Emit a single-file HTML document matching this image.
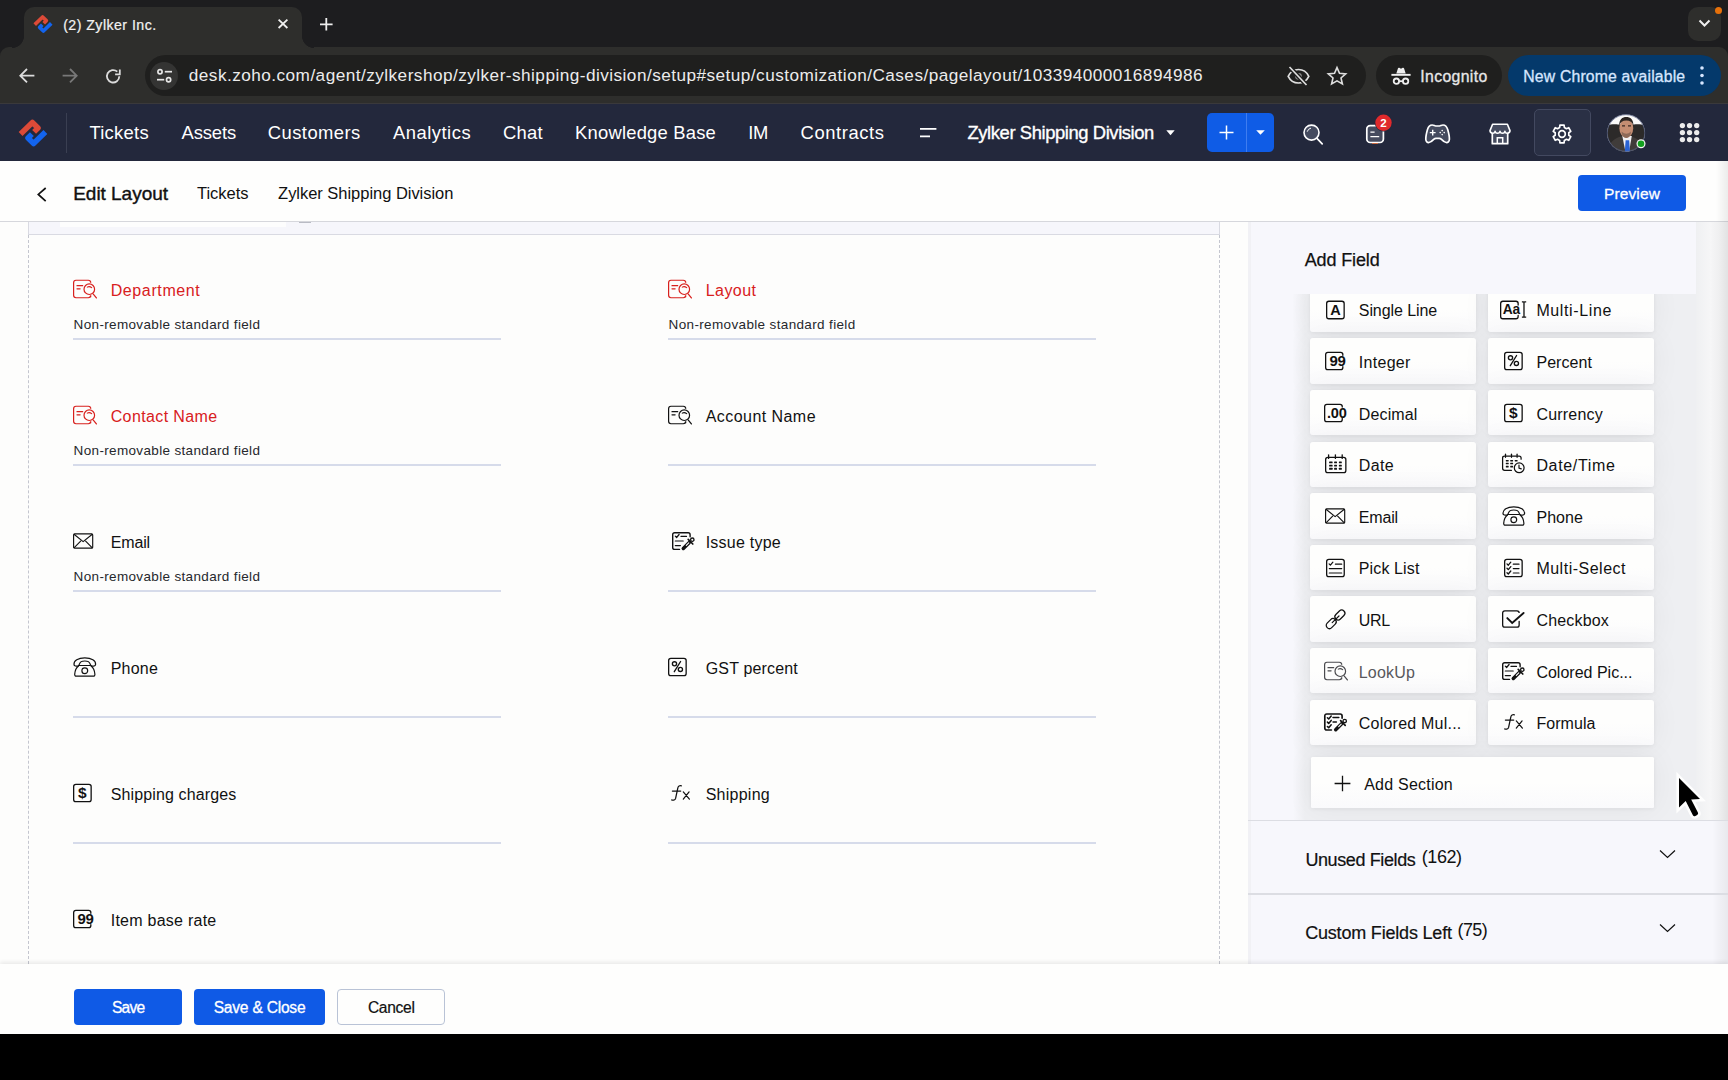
<!DOCTYPE html>
<html lang="en">
<head>
<meta charset="utf-8">
<title>(2) Zylker Inc.</title>
<style>
*{box-sizing:border-box;margin:0;padding:0}
html,body{width:1728px;height:1080px;overflow:hidden;background:#000}
body{position:relative;font-family:"Liberation Sans",sans-serif;color:#111}
.abs{position:absolute}
.t{position:absolute;white-space:nowrap;line-height:1}
svg{position:absolute;overflow:visible}
#tabstrip{left:0;top:0;width:1728px;height:62px;background:#1d1d1f}
#tab{left:24px;top:7px;width:278px;height:41px;background:#2e2e2c;border-radius:10px 10px 0 0}
#tabL{left:12px;top:35.5px;width:12px;height:12px;background:radial-gradient(circle at 0 0,#1d1d1f 11.7px,#2e2e2c 12.3px)}
#tabR{left:302px;top:35.5px;width:12px;height:12px;background:radial-gradient(circle at 100% 0,#1d1d1f 11.7px,#2e2e2c 12.3px)}
#toolbar{left:0;top:47px;width:1728px;height:57px;background:#2e2e2c;border-radius:9px 9px 0 0}
#urlbar{left:145px;top:55px;width:1221px;height:41px;border-radius:21px;background:#1f1f1e}
#siteinfo{left:150px;top:61.5px;width:28px;height:28px;border-radius:14px;background:#343433}
#incog{left:1376px;top:55px;width:126px;height:41px;border-radius:21px;background:#1f1f1e}
#newchrome{left:1508px;top:55px;width:213px;height:41px;border-radius:21px;background:#04396b}
#tabdd{left:1688px;top:7px;width:33px;height:34px;border-radius:10px;background:#2e2e2c}
#odot{left:1714.5px;top:6.5px;width:7px;height:7px;border-radius:4px;background:#e8710a}
#nav{left:0;top:104px;width:1728px;height:57px;background:#23283c}
#tbline{left:0;top:103px;width:1728px;height:1px;background:#3a393b}
#navdiv{left:66px;top:113px;width:1px;height:40px;background:#3a3f52}
#plus{left:1207px;top:113px;width:67px;height:39px;border-radius:5px;background:#0f5ce6}
#plusdiv{left:1246px;top:113px;width:1px;height:39px;background:#3f7df0}
#gearbox{left:1534px;top:109px;width:57px;height:47px;border-radius:5px;background:#2a3045;border:1px solid #434960}
#hdr{left:0;top:161px;width:1728px;height:61px;background:#fefefd;border-bottom:1px solid #d6d7dc}
#preview{left:1578px;top:175px;width:108px;height:36px;border-radius:4px;background:#0f5ae6}
#main{left:0;top:222px;width:1728px;height:742px;background:#fdfdfc}
#band{left:28px;top:222px;width:1192px;height:13px;background:#f6f6fb;border:1px solid #d9dae2;border-top:0}
#bandw{left:60px;top:222px;width:226px;height:5px;background:#fdfdfd}
#bandm{left:299px;top:222px;width:12px;height:1px;background:#b9bbc4}
.dash{position:absolute;top:235px;width:0;height:729px;border-left:1px dashed #c4c6cf}
#panel{left:1248px;top:222px;width:480px;height:742px;background:#f7f7fc;border-left:3px solid #f1f1f5}
#cardsbg{display:none}
.pdiv{position:absolute;left:1248px;width:480px;height:1px;background:#dcdde3}
#rshade{left:1696px;top:222px;width:32px;height:598px;background:linear-gradient(90deg,#eff0f2,#f6f6f7 45%,#efeff0 72%,#e2e2e3)}
#rshade3{left:1712px;top:820px;width:16px;height:144px;background:linear-gradient(90deg,rgba(0,0,0,0),rgba(0,0,0,.06))}
#rshade2{left:1716px;top:161px;width:12px;height:61px;background:linear-gradient(90deg,rgba(0,0,0,0),rgba(0,0,0,.07))}
#footer{left:0;top:964px;width:1728px;height:70px;background:#fefefd;box-shadow:0 -2px 4px rgba(0,0,0,.08)}
.btn{position:absolute;top:989px;height:36px;border-radius:4px;background:#0f5ae6}
.ul{position:absolute;height:2px;background:#d6dbea;width:428px}
.card{position:absolute;width:165.5px;height:45.6px;background:linear-gradient(#fefefd 50%,#fafafc);border-radius:3px;box-shadow:0 0 30px rgba(30,30,40,.055),0 1px 4px rgba(30,30,40,.06)}
#cardclip{left:1293px;top:294px;width:403px;height:526px;overflow:hidden;background:linear-gradient(90deg,rgba(238,239,242,0),#eeeff2 12px,#eeeff2)}
</style>
</head>
<body>
<div id="tabstrip" class="abs"></div>
<div id="toolbar" class="abs"></div>
<div id="tab" class="abs"></div><div id="tabL" class="abs"></div><div id="tabR" class="abs"></div>
<div id="tabdd" class="abs"></div><div id="odot" class="abs"></div>
<div id="urlbar" class="abs"></div><div id="siteinfo" class="abs"></div>
<div id="incog" class="abs"></div>
<div id="newchrome" class="abs"></div>
<div id="tbline" class="abs"></div><div id="nav" class="abs"></div><div id="navdiv" class="abs"></div>
<div id="plus" class="abs"></div><div id="plusdiv" class="abs"></div>
<div id="gearbox" class="abs"></div>
<div id="hdr" class="abs"></div>
<div id="preview" class="abs"></div>
<div id="main" class="abs"></div>
<div id="band" class="abs"></div><div id="bandw" class="abs"></div><div id="bandm" class="abs"></div>
<div class="dash" style="left:28px"></div><div class="dash" style="left:1219px"></div>
<div id="panel" class="abs"></div>
<div id="cardsbg" class="abs"></div><div id="cardclip" class="abs" style=""><div class="card" style="left:17.4px;top:-7.3px"></div><div class="card" style="left:195.0px;top:-7.3px"></div><div class="card" style="left:17.4px;top:44.3px"></div><div class="card" style="left:195.0px;top:44.3px"></div><div class="card" style="left:17.4px;top:95.9px"></div><div class="card" style="left:195.0px;top:95.9px"></div><div class="card" style="left:17.4px;top:147.5px"></div><div class="card" style="left:195.0px;top:147.5px"></div><div class="card" style="left:17.4px;top:199.1px"></div><div class="card" style="left:195.0px;top:199.1px"></div><div class="card" style="left:17.4px;top:250.7px"></div><div class="card" style="left:195.0px;top:250.7px"></div><div class="card" style="left:17.4px;top:302.3px"></div><div class="card" style="left:195.0px;top:302.3px"></div><div class="card" style="left:17.4px;top:353.9px"></div><div class="card" style="left:195.0px;top:353.9px"></div><div class="card" style="left:17.4px;top:405.5px"></div><div class="card" style="left:195.0px;top:405.5px"></div><div class="card" style="left:18px;top:463px;width:342.5px;height:51px;border-radius:1.5px"></div><svg style="left:33.20px;top:3.50px" width="19.8" height="24" viewBox="0 -12 19.8 24"><rect x="0.65" y="-8.75" width="17.500000000000004" height="17.5" rx="2.2" fill="none" stroke="#111" stroke-width="1.3"/><text x="9.4" y="5" font-size="14.5" font-weight="bold" fill="#111" text-anchor="middle" font-family="Liberation Sans,sans-serif" >A</text></svg><svg style="left:207.20px;top:3.50px" width="27.2" height="24" viewBox="0 -12 27.2 24"><path d="M18.150000000000002 -4.9V-6.55Q18.150000000000002 -8.75 15.950000000000003 -8.75H2.85Q0.65 -8.75 0.65 -6.55V6.55Q0.65 8.75 2.85 8.75H15.950000000000003Q18.150000000000002 8.75 18.150000000000002 6.55V5.5" fill="none" stroke="#111" stroke-width="1.3" stroke-linecap="round"/><text x="2.8" y="3.5" font-size="13.8" font-weight="bold" fill="#111" text-anchor="start" font-family="Liberation Sans,sans-serif" letter-spacing="-.3">Aa</text><path d="M21.9 -8.2H23.2Q24 -8.2 24 -7.4V6.400Q24 7.200 23.200 7.200H21.900M26.200 -8.200H24.900Q24.050 -8.200 24.050 -7.400M24.050 6.400Q24.050 7.200 24.900 7.200H26.200" fill="none" stroke="#111" stroke-width="1.300"/></svg><svg style="left:32.25px;top:55.10px" width="21.7" height="24" viewBox="0 -12 21.7 24"><path d="M17.85 -5.7V-6.499999999999999Q17.85 -8.7 15.650000000000002 -8.7H2.85Q0.65 -8.7 0.65 -6.499999999999999V6.499999999999999Q0.65 8.7 2.85 8.7H15.650000000000002Q17.85 8.7 17.85 6.499999999999999V5.7" fill="none" stroke="#111" stroke-width="1.3" stroke-linecap="round"/><text x="4.6" y="5.2" font-size="15" font-weight="bold" fill="#111" text-anchor="start" font-family="Liberation Sans,sans-serif" letter-spacing="-.5">99</text></svg><svg style="left:210.90px;top:55.10px" width="19.8" height="24" viewBox="0 -12 19.8 24"><rect x="0.65" y="-8.7" width="17.500000000000004" height="17.4" rx="2.2" fill="none" stroke="#111" stroke-width="1.3"/><g fill="none" stroke="#111" stroke-width="1.35"><circle cx="6.5" cy="-3.2" r="2.1"/><circle cx="12.4" cy="2.4" r="2.1"/><path d="M12.6 -5.5 6.300 4.700" stroke-linecap="round"/></g></svg><svg style="left:31.05px;top:106.70px" width="24.1" height="24" viewBox="0 -12 24.1 24"><path d="M18.25 -6V-6.3999999999999995Q18.25 -8.6 16.05 -8.6H2.85Q0.65 -8.6 0.65 -6.3999999999999995V6.3999999999999995Q0.65 8.6 2.85 8.6H16.05Q18.25 8.6 18.25 6.3999999999999995V5.3" fill="none" stroke="#111" stroke-width="1.3" stroke-linecap="round"/><text x="2.9" y="5.1" font-size="14.6" font-weight="bold" fill="#111" text-anchor="start" font-family="Liberation Sans,sans-serif" letter-spacing="-.2">.00</text></svg><svg style="left:210.90px;top:106.70px" width="19.8" height="24" viewBox="0 -12 19.8 24"><rect x="0.65" y="-8.6" width="17.500000000000004" height="17.2" rx="2.2" fill="none" stroke="#111" stroke-width="1.3"/><text x="9.3" y="4.9" font-size="15.5" font-weight="bold" fill="#111" text-anchor="middle" font-family="Liberation Sans,sans-serif" >$</text></svg><svg style="left:31.85px;top:158.30px" width="22.5" height="24" viewBox="0 -12 22.5 24"><g transform="translate(0,1)"><rect x="0.65" y="-7.699999999999999" width="20.200000000000003" height="15.399999999999999" rx="2.2" fill="none" stroke="#111" stroke-width="1.3"/></g><path d="M3.6 -9.2V-5.600" stroke="#111" stroke-width="1.300" stroke-linecap="round"/><path d="M10.4 -9.2V-5.600" stroke="#111" stroke-width="1.300" stroke-linecap="round"/><path d="M17.2 -9.2V-5.600" stroke="#111" stroke-width="1.300" stroke-linecap="round"/><rect x="4.1" y="-2.45" width="3.5" height="1.800" rx=".5" fill="#111"/><rect x="4.1" y="0.75" width="3.5" height="1.800" rx=".5" fill="#111"/><rect x="4.1" y="3.85" width="3.5" height="1.800" rx=".5" fill="#111"/><rect x="9.1" y="-2.45" width="2.9" height="1.800" rx=".5" fill="#111"/><rect x="9.1" y="0.75" width="2.9" height="1.800" rx=".5" fill="#111"/><rect x="9.1" y="3.85" width="2.9" height="1.800" rx=".5" fill="#111"/><rect x="13.9" y="-2.45" width="2.9" height="1.800" rx=".5" fill="#111"/><rect x="13.9" y="0.75" width="2.9" height="1.800" rx=".5" fill="#111"/><rect x="13.9" y="3.85" width="2.9" height="1.800" rx=".5" fill="#111"/></svg><svg style="left:208.95px;top:158.30px" width="23.7" height="24" viewBox="0 -12 23.7 24"><path d="M19.1 -4.800V-6Q19.100 -8 17.100 -8H2.600Q.600 -8 .600 -6V4.300Q.600 6.300 2.600 6.300H9.500" fill="none" stroke="#111" stroke-width="1.250" stroke-linecap="round"/><path d="M3.5 -9.800V-6.700" stroke="#111" stroke-width="1.200" stroke-linecap="round"/><path d="M9.5 -9.800V-6.700" stroke="#111" stroke-width="1.200" stroke-linecap="round"/><path d="M15.1 -9.800V-6.700" stroke="#111" stroke-width="1.200" stroke-linecap="round"/><rect x="3.8" y="-4.1" width="2.900" height="1.600" rx=".4" fill="#111"/><rect x="8.2" y="-4.1" width="2.900" height="1.600" rx=".4" fill="#111"/><rect x="12.7" y="-4.1" width="2.900" height="1.600" rx=".4" fill="#111"/><rect x="3.8" y="-1.3" width="2.900" height="1.600" rx=".4" fill="#111"/><rect x="8.2" y="-1.3" width="2.900" height="1.600" rx=".4" fill="#111"/><rect x="3.8" y="1.8" width="2.900" height="1.600" rx=".4" fill="#111"/><rect x="8.2" y="1.8" width="2.900" height="1.600" rx=".4" fill="#111"/><circle cx="17.200" cy="3.800" r="4.900" fill="none" stroke="#111" stroke-width="1.250"/><path d="M17 1.100V4.200L19.300 4.900" fill="none" stroke="#111" stroke-width="1.200" stroke-linecap="round" stroke-linejoin="round"/></svg><svg style="left:32.45px;top:209.90px" width="21.3" height="24" viewBox="0 -12 21.3 24"><g fill="none" stroke="#111" stroke-width="1.150" stroke-linejoin="round"><rect x=".6" y="-7.100" width="19.100" height="14.300" rx="1"/><path d="M1 -6.700 10.150 .600 19.300 -6.700M1 6.800 7.900 -.100M19.300 6.800 12.400 -.100"/></g></svg><svg style="left:208.50px;top:209.90px" width="24.6" height="24" viewBox="0 -12 24.6 24"><g fill="none" stroke="#111" stroke-width="1.200" stroke-linejoin="round"><path d="M1 -2.600C.700 -6.200 5 -9.200 11.800 -9.200S22.900 -6.200 22.600 -2.600C22.500 -1.200 21.300 -.800 20 -.900L18.600 -1.100C17.500 -1.300 17.300 -2.100 17.100 -3.100C16.500 -5.300 14.500 -6 11.800 -6S7.100 -5.300 6.500 -3.100C6.300 -2.100 6.100 -1.300 5 -1.100L3.600 -.900C2.300 -.800 1.100 -1.200 1 -2.600Z"/><path d="M6 -1.500H17.600M5.800 -1.300C3.200 .500 1.900 4 1.700 7.400C1.650 8.600 2.300 9.100 3.300 9.100H20.300C21.300 9.100 21.950 8.600 21.900 7.400C21.700 4 20.400 .500 17.800 -1.300"/><circle cx="11.800" cy="3.700" r="2.900"/></g></svg><svg style="left:33.15px;top:261.50px" width="19.9" height="24" viewBox="0 -12 19.9 24"><rect x="0.65" y="-8.7" width="17.6" height="17.4" rx="2.2" fill="none" stroke="#111" stroke-width="1.3"/><path d="M3.1 -4.2l1.300 1.300 2.500 -3" fill="none" stroke="#111" stroke-width="1.2" stroke-linecap="round" stroke-linejoin="round"/><path d="M9.4 -3.8H15.7" stroke="#111" stroke-width="1.2" stroke-linecap="round"/><path d="M3.3 0.6H15.7" stroke="#111" stroke-width="1.2" stroke-linecap="round"/><path d="M3.3 5H15.7" stroke="#111" stroke-width="1.2" stroke-linecap="round"/></svg><svg style="left:210.90px;top:261.50px" width="19.8" height="24" viewBox="0 -12 19.8 24"><rect x="0.65" y="-8.7" width="17.500000000000004" height="17.4" rx="2.2" fill="none" stroke="#111" stroke-width="1.3"/><path d="M3 -4.1l1.300 1.300 2.500 -3" fill="none" stroke="#111" stroke-width="1.3" stroke-linecap="round" stroke-linejoin="round"/><path d="M9.3 -3.8H15" stroke="#111" stroke-width="1.2" stroke-linecap="round"/><path d="M3 0.3l1.300 1.300 2.500 -3" fill="none" stroke="#111" stroke-width="1.3" stroke-linecap="round" stroke-linejoin="round"/><path d="M9.3 0.6H15" stroke="#111" stroke-width="1.2" stroke-linecap="round"/><path d="M3 4.7l1.300 1.300 2.500 -3" fill="none" stroke="#111" stroke-width="1.3" stroke-linecap="round" stroke-linejoin="round"/><path d="M9.3 5H15" stroke="#111" stroke-width="1.2" stroke-linecap="round"/></svg><svg style="left:33.05px;top:313.10px" width="20.1" height="24" viewBox="0 -12 20.1 24"><rect x="8.2" y="-7.2" width="11.400" height="6.400" rx="3.200" transform="rotate(-45 13.9 -4)" fill="none" stroke="#111" stroke-width="1.250"/><rect x="-0.5" y="1.3999999999999995" width="11.400" height="6.400" rx="3.200" transform="rotate(-45 5.2 4.6)" fill="none" stroke="#111" stroke-width="1.250"/><path d="M6.200 3.600 13 -3" stroke="#111" stroke-width="1.200" stroke-linecap="round"/></svg><svg style="left:209.05px;top:313.10px" width="23.5" height="24" viewBox="0 -12 23.5 24"><path d="M17.150000000000002 -6.4V-5.95Q17.150000000000002 -8.15 14.950000000000003 -8.15H2.85Q0.65 -8.15 0.65 -5.95V5.95Q0.65 8.15 2.85 8.15H14.950000000000003Q17.150000000000002 8.15 17.150000000000002 5.95V2.3" fill="none" stroke="#111" stroke-width="1.3" stroke-linecap="round"/><path d="M5.300 -.900 10.200 4 21.600 -6" fill="none" stroke="#111" stroke-width="1.900" stroke-linecap="round" stroke-linejoin="miter"/></svg><svg style="left:30.75px;top:364.70px" width="24.7" height="24" viewBox="0 -12 24.7 24"><path d="M17.7 -7.1V-6.35Q17.7 -8.75 15.299999999999999 -8.75H3.0Q0.6 -8.75 0.6 -6.35V6.35Q0.6 8.75 3.0 8.75H15.299999999999999Q17.7 8.75 17.7 6.35V7.8" fill="none" stroke="#4a4a4e" stroke-width="1.2" stroke-linecap="round"/><path d="M4 -3.3H9.7" stroke="#4a4a4e" stroke-width="1.2" stroke-linecap="round"/><path d="M4 -0.2H7.1" stroke="#4a4a4e" stroke-width="1.2" stroke-linecap="round"/><circle cx="16.300" cy=".200" r="5.300" fill="none" stroke="#4a4a4e" stroke-width="1.200"/><path d="M20.100 4.800 23.400 8.900" stroke="#4a4a4e" stroke-width="1.250" stroke-linecap="round"/><path d="M14.300 -1.900Q16.400 -3.200 18.700 -1.300" fill="none" stroke="#4a4a4e" stroke-width="1.100" stroke-linecap="round"/></svg><svg style="left:209.30px;top:364.70px" width="23" height="24" viewBox="0 -12 23 24"><path d="M18.100 -4.200V-6.300Q18.100 -8.300 16.100 -8.300H2.700Q.700 -8.300 .700 -6.300V6.400Q.700 8.400 2.700 8.400H7.500" fill="none" stroke="#111" stroke-width="1.400" stroke-linecap="round"/><path d="M3.3 -4.8l1.300 1.300 2.500 -3" fill="none" stroke="#111" stroke-width="1.2" stroke-linecap="round" stroke-linejoin="round"/><path d="M9 -4.6H14.5" stroke="#111" stroke-width="1.2" stroke-linecap="round"/><path d="M3.3 0H11.2" stroke="#111" stroke-width="1.2" stroke-linecap="round"/><path d="M3.3 4.6H8.4" stroke="#111" stroke-width="1.2" stroke-linecap="round"/><g transform="translate(0,0)"><path d="M11.300 7.400 17.300 1.400" stroke="#111" stroke-width="3.500" stroke-linecap="round"/><path d="M14.300 4.400 16.800 1.900" stroke="#fff" stroke-width="1.100" stroke-linecap="round"/><path d="M16.200 -1.600 20.800 3" stroke="#111" stroke-width="1.700" stroke-linecap="round"/><circle cx="20.300" cy="-1.300" r="1.700" fill="#fff" stroke="#111" stroke-width="1.300"/></g></svg><svg style="left:31.35px;top:416.30px" width="23.5" height="24" viewBox="0 -12 23.5 24"><path d="M18.100 -3.800V-6Q18.100 -8 16.100 -8H2.800Q.800 -8 .800 -6V6Q.800 8 2.800 8H7.400" fill="none" stroke="#111" stroke-width="1.650" stroke-linecap="round"/><path d="M3.4 -4.3l1.300 1.300 2.500 -3" fill="none" stroke="#111" stroke-width="1.5" stroke-linecap="round" stroke-linejoin="round"/><path d="M3.4 0.1l1.300 1.300 2.500 -3" fill="none" stroke="#111" stroke-width="1.5" stroke-linecap="round" stroke-linejoin="round"/><path d="M3.4 4.5l1.300 1.300 2.500 -3" fill="none" stroke="#111" stroke-width="1.5" stroke-linecap="round" stroke-linejoin="round"/><path d="M9 -4.5H14.8" stroke="#111" stroke-width="1.5" stroke-linecap="round"/><path d="M9 0H12.4" stroke="#111" stroke-width="1.4" stroke-linecap="round"/><g transform="translate(0.4,0.3)"><path d="M11.300 7.400 17.300 1.400" stroke="#111" stroke-width="3.500" stroke-linecap="round"/><path d="M14.300 4.400 16.800 1.900" stroke="#fff" stroke-width="1.100" stroke-linecap="round"/><path d="M16.200 -1.600 20.800 3" stroke="#111" stroke-width="1.700" stroke-linecap="round"/><circle cx="20.300" cy="-1.300" r="1.700" fill="#fff" stroke="#111" stroke-width="1.300"/></g></svg><svg style="left:210.95px;top:416.30px" width="19.7" height="24" viewBox="0 -12 19.7 24"><g fill="none" stroke="#111" stroke-width="1.250" stroke-linecap="round" stroke-linejoin="round"><path d="M10.400 -7.200C8.600 -7.700 7.200 -7 6.800 -5L4.600 5.400C4.200 7.100 2.600 7.500 .600 7"/><path d="M1.400 -1.900H9.700"/><path d="M12.300 -1.100 18.400 6.100M18.100 -1.100 12.300 6.100"/></g></svg></div>
<div id="rshade" class="abs"></div><div id="rshade2" class="abs"></div><div id="rshade3" class="abs"></div>
<div class="pdiv" style="top:820px"></div>
<div class="pdiv" style="top:893.3px;height:1.4px"></div>
<div class="ul" style="left:73px;top:338px"></div><div class="ul" style="left:668px;top:338px"></div><div class="ul" style="left:73px;top:464px"></div><div class="ul" style="left:668px;top:464px"></div><div class="ul" style="left:73px;top:590px"></div><div class="ul" style="left:668px;top:590px"></div><div class="ul" style="left:73px;top:716px"></div><div class="ul" style="left:668px;top:716px"></div><div class="ul" style="left:73px;top:842px"></div><div class="ul" style="left:668px;top:842px"></div>
<div id="footer" class="abs"></div>
<div class="btn" style="left:74px;width:108px"></div>
<div class="btn" style="left:194px;width:131px"></div>
<div class="btn" style="left:337px;width:108px;background:#fefefd;border:1px solid #b9c3d6"></div>
<div class="t" style="left:63.2px;top:18.1px;font-size:14.2px;color:#f2f2f2;letter-spacing:0.445px;-webkit-text-stroke:.2px #f2f2f2">(2) Zylker Inc.</div>
<div class="t" style="left:188.8px;top:66.6px;font-size:17.2px;color:#ececec;letter-spacing:0.461px;">desk.zoho.com/agent/zylkershop/zylker-shipping-division/setup#setup/customization/Cases/pagelayout/103394000016894986</div>
<div class="t" style="left:1420.3px;top:68.7px;font-size:15.8px;color:#e8e8e8;letter-spacing:0.353px;-webkit-text-stroke:.3px #e8e8e8">Incognito</div>
<div class="t" style="left:1523.3px;top:68.7px;font-size:15.8px;color:#d6e6ff;letter-spacing:0.154px;-webkit-text-stroke:.3px #d6e6ff">New Chrome available</div>
<div class="t" style="left:89.4px;top:123.8px;font-size:18.4px;color:#fff;letter-spacing:0.277px;">Tickets</div>
<div class="t" style="left:181.5px;top:123.8px;font-size:18.4px;color:#fff;letter-spacing:-0.117px;">Assets</div>
<div class="t" style="left:267.8px;top:123.8px;font-size:18.4px;color:#fff;letter-spacing:0.442px;">Customers</div>
<div class="t" style="left:393.0px;top:123.8px;font-size:18.4px;color:#fff;letter-spacing:0.501px;">Analytics</div>
<div class="t" style="left:502.9px;top:123.8px;font-size:18.4px;color:#fff;letter-spacing:0.310px;">Chat</div>
<div class="t" style="left:575.1px;top:123.8px;font-size:18.4px;color:#fff;letter-spacing:0.205px;">Knowledge Base</div>
<div class="t" style="left:748.3px;top:123.8px;font-size:18.4px;color:#fff;letter-spacing:-0.369px;">IM</div>
<div class="t" style="left:800.6px;top:123.8px;font-size:18.4px;color:#fff;letter-spacing:0.566px;">Contracts</div>
<div class="t" style="left:967.5px;top:123.8px;font-size:18.4px;color:#fff;letter-spacing:-0.410px;-webkit-text-stroke:.35px #fff">Zylker Shipping Division</div>
<div class="t" style="left:73.2px;top:184.4px;font-size:19px;color:#111;letter-spacing:-0.025px;-webkit-text-stroke:.4px #111">Edit Layout</div>
<div class="t" style="left:197.0px;top:185.3px;font-size:16.5px;color:#111;letter-spacing:-0.008px;">Tickets</div>
<div class="t" style="left:278.1px;top:185.3px;font-size:16.5px;color:#111;letter-spacing:-0.032px;">Zylker Shipping Division</div>
<div class="t" style="left:1604.0px;top:186.0px;font-size:15.5px;color:#fff;letter-spacing:0.123px;-webkit-text-stroke:.3px #fff">Preview</div>
<div class="t" style="left:110.7px;top:282.7px;font-size:16px;color:#d8201d;letter-spacing:0.611px;">Department</div>
<div class="t" style="left:73.6px;top:318.1px;font-size:13.5px;color:#26282c;letter-spacing:0.343px;">Non-removable standard field</div>
<div class="t" style="left:110.7px;top:408.7px;font-size:16px;color:#d8201d;letter-spacing:0.378px;">Contact Name</div>
<div class="t" style="left:73.6px;top:444.1px;font-size:13.5px;color:#26282c;letter-spacing:0.343px;">Non-removable standard field</div>
<div class="t" style="left:110.7px;top:534.7px;font-size:16px;color:#111;letter-spacing:-0.143px;">Email</div>
<div class="t" style="left:73.6px;top:570.1px;font-size:13.5px;color:#26282c;letter-spacing:0.343px;">Non-removable standard field</div>
<div class="t" style="left:110.7px;top:660.7px;font-size:16px;color:#111;letter-spacing:0.207px;">Phone</div>
<div class="t" style="left:110.7px;top:786.7px;font-size:16px;color:#111;letter-spacing:0.135px;">Shipping charges</div>
<div class="t" style="left:110.7px;top:912.7px;font-size:16px;color:#111;letter-spacing:0.251px;">Item base rate</div>
<div class="t" style="left:705.7px;top:282.7px;font-size:16px;color:#d8201d;letter-spacing:0.459px;">Layout</div>
<div class="t" style="left:668.6px;top:318.1px;font-size:13.5px;color:#26282c;letter-spacing:0.353px;">Non-removable standard field</div>
<div class="t" style="left:705.7px;top:408.7px;font-size:16px;color:#111;letter-spacing:0.447px;">Account Name</div>
<div class="t" style="left:705.7px;top:534.7px;font-size:16px;color:#111;letter-spacing:0.236px;">Issue type</div>
<div class="t" style="left:705.7px;top:660.7px;font-size:16px;color:#111;letter-spacing:0.171px;">GST percent</div>
<div class="t" style="left:705.7px;top:786.7px;font-size:16px;color:#111;letter-spacing:0.252px;">Shipping</div>
<div class="t" style="left:1304.7px;top:250.7px;font-size:18px;color:#111;letter-spacing:-0.127px;-webkit-text-stroke:.25px #111">Add Field</div>
<div class="t" style="left:1358.8px;top:303.4px;font-size:16px;color:#111;letter-spacing:-0.079px;">Single Line</div>
<div class="t" style="left:1536.4px;top:303.4px;font-size:16px;color:#111;letter-spacing:0.624px;">Multi-Line</div>
<div class="t" style="left:1358.8px;top:355.0px;font-size:16px;color:#111;letter-spacing:0.298px;">Integer</div>
<div class="t" style="left:1536.4px;top:355.0px;font-size:16px;color:#111;letter-spacing:0.066px;">Percent</div>
<div class="t" style="left:1358.8px;top:406.6px;font-size:16px;color:#111;letter-spacing:0.129px;">Decimal</div>
<div class="t" style="left:1536.4px;top:406.6px;font-size:16px;color:#111;letter-spacing:0.212px;">Currency</div>
<div class="t" style="left:1358.8px;top:458.2px;font-size:16px;color:#111;letter-spacing:0.351px;">Date</div>
<div class="t" style="left:1536.4px;top:458.2px;font-size:16px;color:#111;letter-spacing:0.655px;">Date/Time</div>
<div class="t" style="left:1358.8px;top:509.8px;font-size:16px;color:#111;letter-spacing:-0.163px;">Email</div>
<div class="t" style="left:1536.4px;top:509.8px;font-size:16px;color:#111;letter-spacing:0.067px;">Phone</div>
<div class="t" style="left:1358.8px;top:561.4px;font-size:16px;color:#111;letter-spacing:0.125px;">Pick List</div>
<div class="t" style="left:1536.4px;top:561.4px;font-size:16px;color:#111;letter-spacing:0.502px;">Multi-Select</div>
<div class="t" style="left:1358.8px;top:613.0px;font-size:16px;color:#111;letter-spacing:-0.272px;">URL</div>
<div class="t" style="left:1536.4px;top:613.0px;font-size:16px;color:#111;letter-spacing:0.180px;">Checkbox</div>
<div class="t" style="left:1358.8px;top:664.6px;font-size:16px;color:#58585c;letter-spacing:0.174px;">LookUp</div>
<div class="t" style="left:1536.4px;top:664.6px;font-size:16px;color:#111;letter-spacing:0.004px;">Colored Pic...</div>
<div class="t" style="left:1358.8px;top:716.2px;font-size:16px;color:#111;letter-spacing:0.222px;">Colored Mul...</div>
<div class="t" style="left:1536.4px;top:716.2px;font-size:16px;color:#111;letter-spacing:0.059px;">Formula</div>
<div class="t" style="left:1364.2px;top:777.1px;font-size:16px;color:#111;letter-spacing:0.229px;">Add Section</div>
<div class="t" style="left:1305.4px;top:851.2px;font-size:18px;color:#111;letter-spacing:-0.389px;-webkit-text-stroke:.2px #111">Unused Fields</div>
<div class="t" style="left:1421.7px;top:848.3px;font-size:18px;color:#111;letter-spacing:-0.406px;">(162)</div>
<div class="t" style="left:1305.2px;top:924.4px;font-size:18px;color:#111;letter-spacing:-0.192px;-webkit-text-stroke:.2px #111">Custom Fields Left</div>
<div class="t" style="left:1457.6px;top:921.4px;font-size:18px;color:#111;letter-spacing:-0.629px;">(75)</div>
<div class="t" style="left:111.9px;top:999.9px;font-size:15.6px;color:#fff;letter-spacing:-0.737px;-webkit-text-stroke:.3px #fff">Save</div>
<div class="t" style="left:213.7px;top:999.9px;font-size:15.6px;color:#fff;letter-spacing:-0.232px;-webkit-text-stroke:.3px #fff">Save &amp; Close</div>
<div class="t" style="left:367.9px;top:999.9px;font-size:15.6px;color:#111;letter-spacing:-0.308px;-webkit-text-stroke:.2px #111">Cancel</div>
<!-- chrome icons -->
<svg style="left:278.2px;top:19.1px" width="10" height="9.6" viewBox="0 0 10 9.6"><path d="M.6.6 9.4 9M9.4.6.6 9" stroke="#efefef" stroke-width="1.8" fill="none"/></svg>
<svg style="left:320px;top:17.6px" width="12.6" height="12.6" viewBox="0 0 12.6 12.6"><path d="M6.3 0V12.6M0 6.3H12.6" stroke="#efefef" stroke-width="1.8" fill="none"/></svg>
<svg style="left:1698px;top:19px" width="13" height="9" viewBox="0 0 13 9"><path d="M1.5 1.5 6.5 6.5 11.5 1.5" stroke="#efefef" stroke-width="2" fill="none"/></svg>
<svg style="left:18.8px;top:68px" width="16" height="15.4" viewBox="0 0 16 15.4"><path d="M15.4 7.7H1.6M8 1 1.3 7.7 8 14.4" stroke="#dcdcdc" stroke-width="1.8" fill="none"/></svg>
<svg style="left:61.6px;top:68px" width="16" height="15.4" viewBox="0 0 16 15.4"><path d="M.6 7.7H14.4M8 1 14.7 7.7 8 14.4" stroke="#787878" stroke-width="1.8" fill="none"/></svg>
<svg style="left:105px;top:67.5px" width="17" height="17" viewBox="0 0 17 17"><path d="M14.3 8.3A6.2 6.2 0 1 1 12.3 3.7" stroke="#dcdcdc" stroke-width="1.8" fill="none"/><path d="M14.8 1.6V6.3H10.1" stroke="#dcdcdc" stroke-width="1.8" fill="none"/></svg>
<svg style="left:155px;top:67px" width="19" height="18" viewBox="0 0 19 18"><g stroke="#e6e6e6" stroke-width="1.7" fill="none"><circle cx="5" cy="4.7" r="2.1"/><path d="M9.8 4.7H17"/><path d="M2 12.7H9.2"/><circle cx="13.6" cy="12.7" r="2.1"/></g></svg>
<svg style="left:1287px;top:66px" width="23" height="20" viewBox="0 0 23 20"><g stroke="#dedede" stroke-width="1.7" fill="none"><path d="M1.2 10.3C3.5 5.6 7.2 3.5 11.5 3.5S19.5 5.6 21.8 10.3C19.5 15 15.8 17 11.5 17S3.5 15 1.2 10.3Z"/><circle cx="11.5" cy="10.3" r="3.4" fill="#8a8a8a" stroke="none"/><path d="M2.5 1 19.5 19" stroke="#1f1f1e" stroke-width="4.4"/><path d="M2.5 1 19.5 19"/></g></svg>
<svg style="left:1327px;top:65.5px" width="20" height="19" viewBox="0 0 20 19"><path d="M10 1.6 12.5 7.3 18.7 7.9 14 12 15.4 18 10 14.9 4.6 18 6 12 1.3 7.9 7.5 7.3Z" stroke="#dedede" stroke-width="1.6" fill="none" stroke-linejoin="miter"/></svg>
<svg style="left:1390.5px;top:66.5px" width="20" height="18" viewBox="0 0 20 18"><g fill="#efefef"><path d="M5.3 6.6 7 1.2C7.2.6 7.8.5 8.3.8L10 1.7 11.7.8C12.2.5 12.8.6 13 1.200L14.700 6.600Z"/><rect x=".4" y="6.900" width="19.200" height="1.900"/></g><g stroke="#efefef" stroke-width="1.800" fill="none"><circle cx="5.400" cy="14.200" r="2.700"/><circle cx="14.600" cy="14.200" r="2.700"/><path d="M8.100 14.200H11.900"/></g></svg>
<svg style="left:1699.500px;top:65px" width="4" height="21" viewBox="0 0 4 21"><g fill="#d6e6ff"><circle cx="2" cy="3" r="1.800"/><circle cx="2" cy="10.500" r="1.800"/><circle cx="2" cy="18" r="1.800"/></g></svg>

<svg style="left:33.3px;top:13.8px" width="20" height="20" viewBox="-15 -15 30 30"><g fill="none" stroke-width="5.5" stroke-linejoin="round"><polyline points="-12.4,.9 -.6,-10.5 5,-5 1.1,-1.1" stroke="#dc4a38"/><polyline points="12.4,-.9 .6,10.5 -5,5 -1.1,1.1" stroke="#1364ee"/></g></svg>
<!-- nav icons -->
<svg style="left:18.4px;top:117.5px" width="30" height="30" viewBox="-15 -15 30 30"><g fill="none" stroke-width="5.5" stroke-linejoin="round"><polyline points="-12.4,.9 -.6,-10.5 5,-5 1.1,-1.1" stroke="#dc4a38"/><polyline points="12.4,-.9 .6,10.5 -5,5 -1.1,1.1" stroke="#1364ee"/></g></svg>
<svg style="left:919px;top:126px" width="19" height="13" viewBox="0 0 19 13"><path d="M1 2.800H17.400M1 10.400H11" stroke="#fff" stroke-width="1.800" stroke-linecap="butt" fill="none"/></svg>
<svg style="left:1165.8px;top:129.8px" width="9" height="6" viewBox="0 0 9 6"><path d="M.3 .3H8.700L4.500 5.300Z" fill="#fff"/></svg>
<svg style="left:1219px;top:125px" width="15" height="15" viewBox="0 0 15 15"><path d="M7.500 .500V14.500M.500 7.500H14.500" stroke="#fff" stroke-width="1.500" fill="none"/></svg>
<svg style="left:1255.5px;top:130px" width="9" height="5" viewBox="0 0 9 5"><path d="M.2 .2H8.800L4.500 4.800Z" fill="#fff"/></svg>
<svg style="left:1300px;top:121px" width="26" height="26" viewBox="0 0 26 26"><circle cx="11.500" cy="11.600" r="7.500" fill="#454b5f" stroke="#fff" stroke-width="1.600"/><path d="M17.200 17.600 22.200 22.800" stroke="#fff" stroke-width="1.700" stroke-linecap="round"/><path d="M7.300 10.300A4.600 4.600 0 0 1 10.600 7.200" stroke="#fff" stroke-width="1" fill="none" stroke-linecap="round"/></svg>
<svg style="left:1364px;top:112px" width="30" height="34" viewBox="0 0 30 34"><rect x="2.800" y="13.700" width="16.600" height="16.800" rx="3.400" fill="#454b5f" stroke="#fff" stroke-width="1.700"/><path d="M6.400 20.200H10.600M6.400 24.600H15.200" stroke="#fff" stroke-width="1.300"/><path d="M8 31.500H14" stroke="#e8703a" stroke-width=".8"/><circle cx="19.500" cy="10.800" r="8.700" fill="#23283c"/><circle cx="19.500" cy="10.800" r="8.200" fill="#e0292c"/><text x="19.500" y="14.800" font-size="11.500" font-weight="bold" fill="#fff" text-anchor="middle" font-family="Liberation Sans,sans-serif">2</text></svg>
<svg style="left:1424px;top:123px" width="28" height="22" viewBox="0 0 28 22"><path d="M8.200 2C5.500 2 4.300 3.800 3.500 6.500C2.500 10 1.700 13.500 1.800 16.200C1.900 18.600 3.300 19.700 5 19.500C7 19.300 8.500 17.800 10 16.200C10.600 15.600 11.200 15.400 12 15.400H15.200C16 15.400 16.600 15.600 17.200 16.200C18.700 17.800 20.200 19.300 22.200 19.500C23.900 19.700 25.300 18.600 25.400 16.200C25.500 13.500 24.700 10 23.700 6.500C22.900 3.800 21.700 2 19 2C17.500 2 16.700 2.900 15.600 3H11.600C10.500 2.900 9.700 2 8.200 2Z" fill="#454b5f" stroke="#fff" stroke-width="1.700" stroke-linejoin="round"/><path d="M8.700 6.700V12.500M5.800 9.600H11.600" stroke="#fff" stroke-width="1.400"/><g fill="#fff"><circle cx="18.200" cy="7.600" r=".8"/><circle cx="18.200" cy="11.600" r=".8"/><circle cx="16.200" cy="9.600" r=".8"/><circle cx="20.200" cy="9.600" r=".8"/></g></svg>
<svg style="left:1488px;top:121.5px" width="24" height="24" viewBox="0 0 24 24"><path d="M4.300 11V21.700H19.700V11" fill="#454b5f" stroke="#fff" stroke-width="1.700" stroke-linejoin="round"/><path d="M4.600 2.200H19.400L22 8.600C22 10.400 20.500 11.200 19.300 11.200S17 10.400 16.900 9.200C16.800 10.400 15.700 11.200 14.500 11.200S12.100 10.400 12 9.200C11.900 10.400 10.700 11.200 9.500 11.200S7.200 10.400 7.100 9.200C7 10.400 5.900 11.200 4.700 11.200S2 10.400 2 8.600Z" fill="#454b5f" stroke="#fff" stroke-width="1.600" stroke-linejoin="round"/><path d="M9.300 21.500V15.800H14.700V21.500" fill="none" stroke="#fff" stroke-width="1.500"/></svg>
<svg style="left:1550px;top:122px" width="24" height="24" viewBox="-12 -12 24 24"><path d="M-2.36 -6.48 -2.07 -8.96 2.07 -8.96 2.36 -6.48 4.44 -5.29 6.73 -6.27 8.80 -2.69 6.80 -1.20 6.80 1.20 8.80 2.69 6.73 6.27 4.44 5.29 2.36 6.48 2.07 8.96 -2.07 8.96 -2.36 6.48 -4.44 5.29 -6.73 6.27 -8.80 2.69 -6.80 1.20 -6.80 -1.20 -8.80 -2.69 -6.73 -6.27 -4.44 -5.29Z" fill="none" stroke="#fff" stroke-width="1.700" stroke-linejoin="round"/><circle r="3.300" fill="none" stroke="#fff" stroke-width="1.700"/></svg>
<svg style="left:1607px;top:114px" width="38" height="38" viewBox="0 0 38 38"><defs><clipPath id="av"><ellipse cx="19" cy="19" rx="19" ry="18.600"/></clipPath></defs><g clip-path="url(#av)"><rect width="38" height="38" fill="#fbfaf9"/><path d="M0 11.500C3 10.300 8 10 11 10.500L27 10.500C30 10 35 10.300 38 11.500V38H0Z" fill="#2c2a29"/><path d="M1 38C2 27 8 24.500 13.500 22.500L24.500 22.500C30 24.500 36 27 37 38Z" fill="#403c3a"/><path d="M15.300 22 18.500 38H22L24.800 22Z" fill="#f1f1f3"/><path d="M18.600 26.200H22.200L23 38H17.800Z" fill="#2a63d4"/><ellipse cx="19.300" cy="14.300" rx="6.900" ry="9.600" fill="#c48d72"/><path d="M14.500 17.500Q19.300 22 24 17.500Q23.500 23.500 19.300 24Q15 23.500 14.500 17.500Z" fill="#8d6a58"/><path d="M12.300 11.500C11.800 5.500 15.500 3 19.300 3S26.800 5.500 26.300 11.500C25.300 8 23 6.600 19.300 6.600S13.300 8 12.300 11.500Z" fill="#2b2522"/><path d="M15 11.800H18M21 11.800H24" stroke="#3a2a24" stroke-width="1.200"/></g><ellipse cx="19" cy="19" rx="18.700" ry="18.300" fill="none" stroke="#566286" stroke-width=".7"/><circle cx="34" cy="29.700" r="4.500" fill="#f6f6f6"/><circle cx="34" cy="29.700" r="3.300" fill="#12a01e"/></svg>
<svg style="left:0;top:0" width="1728" height="160" viewBox="0 0 1728 160"><g fill="#ececec"><circle cx="1682.4" cy="125.6" r="2.650"/><circle cx="1682.4" cy="132.6" r="2.650"/><circle cx="1682.4" cy="139.6" r="2.650"/><circle cx="1689.55" cy="125.6" r="2.650"/><circle cx="1689.55" cy="132.6" r="2.650"/><circle cx="1689.55" cy="139.6" r="2.650"/><circle cx="1696.7" cy="125.6" r="2.650"/><circle cx="1696.7" cy="132.6" r="2.650"/><circle cx="1696.7" cy="139.6" r="2.650"/></g></svg>
<svg style="left:35.900px;top:186px" width="12" height="17" viewBox="0 0 12 17"><path d="M9.700 2 2.300 8.400 9.700 15.200" fill="none" stroke="#111" stroke-width="1.700"/></svg>
<svg style="left:1333.600px;top:775px" width="17" height="17" viewBox="0 0 17 17"><path d="M8.500 .700V16.300M.600 8.500H16.400" stroke="#111" stroke-width="1.300" fill="none"/></svg>
<svg style="left:1659px;top:849px" width="17" height="10" viewBox="0 0 17 10"><path d="M1 1.500 8.500 8.500 16 1.500" fill="none" stroke="#111" stroke-width="1.200"/></svg>
<svg style="left:1659px;top:923px" width="17" height="10" viewBox="0 0 17 10"><path d="M1 1.500 8.500 8.500 16 1.500" fill="none" stroke="#111" stroke-width="1.200"/></svg>
<svg style="left:1668.9px;top:767.8px" width="40" height="56" viewBox="-10 -10 40 56"><path d="M0 0V29.400L6.700 23 13.900 37.200Q14.800 38.700 16.400 37.900L18.200 36.900Q19.700 36 18.900 34.500L12.200 21.400 21 21Z" fill="#000" stroke="#fefefe" stroke-width="5.200" stroke-linejoin="miter" stroke-miterlimit="10" paint-order="stroke"/></svg>
<svg style="left:73.30px;top:276.90px" width="24.7" height="24" viewBox="0 -12 24.7 24"><path d="M17.7 -7.1V-6.35Q17.7 -8.75 15.299999999999999 -8.75H3.0Q0.6 -8.75 0.6 -6.35V6.35Q0.6 8.75 3.0 8.75H15.299999999999999Q17.7 8.75 17.7 6.35V7.8" fill="none" stroke="#d8201d" stroke-width="1.2" stroke-linecap="round"/><path d="M4 -3.3H9.7" stroke="#d8201d" stroke-width="1.2" stroke-linecap="round"/><path d="M4 -0.2H7.1" stroke="#d8201d" stroke-width="1.2" stroke-linecap="round"/><circle cx="16.300" cy=".200" r="5.300" fill="none" stroke="#d8201d" stroke-width="1.200"/><path d="M20.100 4.800 23.400 8.900" stroke="#d8201d" stroke-width="1.250" stroke-linecap="round"/><path d="M14.300 -1.900Q16.400 -3.200 18.700 -1.300" fill="none" stroke="#d8201d" stroke-width="1.100" stroke-linecap="round"/></svg><svg style="left:73.30px;top:402.90px" width="24.7" height="24" viewBox="0 -12 24.7 24"><path d="M17.7 -7.1V-6.35Q17.7 -8.75 15.299999999999999 -8.75H3.0Q0.6 -8.75 0.6 -6.35V6.35Q0.6 8.75 3.0 8.75H15.299999999999999Q17.7 8.75 17.7 6.35V7.8" fill="none" stroke="#d8201d" stroke-width="1.2" stroke-linecap="round"/><path d="M4 -3.3H9.7" stroke="#d8201d" stroke-width="1.2" stroke-linecap="round"/><path d="M4 -0.2H7.1" stroke="#d8201d" stroke-width="1.2" stroke-linecap="round"/><circle cx="16.300" cy=".200" r="5.300" fill="none" stroke="#d8201d" stroke-width="1.200"/><path d="M20.100 4.800 23.400 8.900" stroke="#d8201d" stroke-width="1.250" stroke-linecap="round"/><path d="M14.300 -1.900Q16.400 -3.200 18.700 -1.300" fill="none" stroke="#d8201d" stroke-width="1.100" stroke-linecap="round"/></svg><svg style="left:73.30px;top:529.00px" width="21.3" height="24" viewBox="0 -12 21.3 24"><g fill="none" stroke="#111" stroke-width="1.150" stroke-linejoin="round"><rect x=".6" y="-7.100" width="19.100" height="14.300" rx="1"/><path d="M1 -6.700 10.150 .600 19.300 -6.700M1 6.800 7.900 -.100M19.300 6.800 12.400 -.100"/></g></svg><svg style="left:73.30px;top:655.40px" width="24.6" height="24" viewBox="0 -12 24.6 24"><g fill="none" stroke="#111" stroke-width="1.200" stroke-linejoin="round"><path d="M1 -2.600C.700 -6.200 5 -9.200 11.800 -9.200S22.900 -6.200 22.600 -2.600C22.500 -1.200 21.300 -.800 20 -.900L18.600 -1.100C17.500 -1.300 17.300 -2.100 17.100 -3.100C16.500 -5.300 14.500 -6 11.800 -6S7.100 -5.300 6.500 -3.100C6.300 -2.100 6.100 -1.300 5 -1.100L3.600 -.900C2.300 -.800 1.100 -1.200 1 -2.600Z"/><path d="M6 -1.500H17.600M5.800 -1.300C3.200 .500 1.900 4 1.700 7.400C1.650 8.600 2.300 9.100 3.300 9.100H20.300C21.300 9.100 21.950 8.600 21.900 7.400C21.700 4 20.400 .500 17.800 -1.300"/><circle cx="11.800" cy="3.700" r="2.900"/></g></svg><svg style="left:73.30px;top:781.00px" width="19.8" height="24" viewBox="0 -12 19.8 24"><rect x="0.65" y="-8.6" width="17.500000000000004" height="17.2" rx="2.2" fill="none" stroke="#111" stroke-width="1.3"/><text x="9.3" y="4.9" font-size="15.5" font-weight="bold" fill="#111" text-anchor="middle" font-family="Liberation Sans,sans-serif" >$</text></svg><svg style="left:73.30px;top:907.00px" width="21.7" height="24" viewBox="0 -12 21.7 24"><path d="M17.85 -5.7V-6.499999999999999Q17.85 -8.7 15.650000000000002 -8.7H2.85Q0.65 -8.7 0.65 -6.499999999999999V6.499999999999999Q0.65 8.7 2.85 8.7H15.650000000000002Q17.85 8.7 17.85 6.499999999999999V5.7" fill="none" stroke="#111" stroke-width="1.3" stroke-linecap="round"/><text x="4.6" y="5.2" font-size="15" font-weight="bold" fill="#111" text-anchor="start" font-family="Liberation Sans,sans-serif" letter-spacing="-.5">99</text></svg><svg style="left:668.00px;top:276.90px" width="24.7" height="24" viewBox="0 -12 24.7 24"><path d="M17.7 -7.1V-6.35Q17.7 -8.75 15.299999999999999 -8.75H3.0Q0.6 -8.75 0.6 -6.35V6.35Q0.6 8.75 3.0 8.75H15.299999999999999Q17.7 8.75 17.7 6.35V7.8" fill="none" stroke="#d8201d" stroke-width="1.2" stroke-linecap="round"/><path d="M4 -3.3H9.7" stroke="#d8201d" stroke-width="1.2" stroke-linecap="round"/><path d="M4 -0.2H7.1" stroke="#d8201d" stroke-width="1.2" stroke-linecap="round"/><circle cx="16.300" cy=".200" r="5.300" fill="none" stroke="#d8201d" stroke-width="1.200"/><path d="M20.100 4.800 23.400 8.900" stroke="#d8201d" stroke-width="1.250" stroke-linecap="round"/><path d="M14.300 -1.900Q16.400 -3.200 18.700 -1.300" fill="none" stroke="#d8201d" stroke-width="1.100" stroke-linecap="round"/></svg><svg style="left:668.00px;top:402.90px" width="24.7" height="24" viewBox="0 -12 24.7 24"><path d="M17.7 -7.1V-6.35Q17.7 -8.75 15.299999999999999 -8.75H3.0Q0.6 -8.75 0.6 -6.35V6.35Q0.6 8.75 3.0 8.75H15.299999999999999Q17.7 8.75 17.7 6.35V7.8" fill="none" stroke="#111" stroke-width="1.2" stroke-linecap="round"/><path d="M4 -3.3H9.7" stroke="#111" stroke-width="1.2" stroke-linecap="round"/><path d="M4 -0.2H7.1" stroke="#111" stroke-width="1.2" stroke-linecap="round"/><circle cx="16.300" cy=".200" r="5.300" fill="none" stroke="#111" stroke-width="1.200"/><path d="M20.100 4.800 23.400 8.900" stroke="#111" stroke-width="1.250" stroke-linecap="round"/><path d="M14.300 -1.900Q16.400 -3.200 18.700 -1.300" fill="none" stroke="#111" stroke-width="1.100" stroke-linecap="round"/></svg><svg style="left:671.70px;top:529.20px" width="23" height="24" viewBox="0 -12 23 24"><path d="M18.100 -4.200V-6.300Q18.100 -8.300 16.100 -8.300H2.700Q.700 -8.300 .700 -6.300V6.400Q.700 8.400 2.700 8.400H7.500" fill="none" stroke="#111" stroke-width="1.400" stroke-linecap="round"/><path d="M3.3 -4.8l1.300 1.300 2.500 -3" fill="none" stroke="#111" stroke-width="1.2" stroke-linecap="round" stroke-linejoin="round"/><path d="M9 -4.6H14.5" stroke="#111" stroke-width="1.2" stroke-linecap="round"/><path d="M3.3 0H11.2" stroke="#111" stroke-width="1.2" stroke-linecap="round"/><path d="M3.3 4.6H8.4" stroke="#111" stroke-width="1.2" stroke-linecap="round"/><g transform="translate(0,0)"><path d="M11.300 7.400 17.300 1.400" stroke="#111" stroke-width="3.500" stroke-linecap="round"/><path d="M14.300 4.400 16.800 1.900" stroke="#fff" stroke-width="1.100" stroke-linecap="round"/><path d="M16.200 -1.600 20.800 3" stroke="#111" stroke-width="1.700" stroke-linecap="round"/><circle cx="20.300" cy="-1.300" r="1.700" fill="#fff" stroke="#111" stroke-width="1.300"/></g></svg><svg style="left:668.30px;top:655.00px" width="19.8" height="24" viewBox="0 -12 19.8 24"><rect x="0.65" y="-8.7" width="17.500000000000004" height="17.4" rx="2.2" fill="none" stroke="#111" stroke-width="1.3"/><g fill="none" stroke="#111" stroke-width="1.35"><circle cx="6.5" cy="-3.2" r="2.1"/><circle cx="12.4" cy="2.4" r="2.1"/><path d="M12.6 -5.5 6.300 4.700" stroke-linecap="round"/></g></svg><svg style="left:670.50px;top:781.00px" width="19.7" height="24" viewBox="0 -12 19.7 24"><g fill="none" stroke="#111" stroke-width="1.250" stroke-linecap="round" stroke-linejoin="round"><path d="M10.400 -7.200C8.600 -7.700 7.200 -7 6.800 -5L4.600 5.400C4.200 7.100 2.600 7.500 .600 7"/><path d="M1.400 -1.900H9.700"/><path d="M12.300 -1.100 18.400 6.100M18.100 -1.100 12.300 6.100"/></g></svg>
</body>
</html>
